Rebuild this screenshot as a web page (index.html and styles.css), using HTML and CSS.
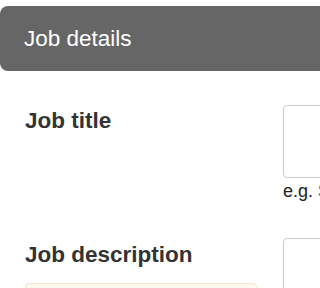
FILE: index.html
```html
<!DOCTYPE html>
<html lang="en">
<head>
<meta charset="utf-8">
<title>Job details</title>
<link rel="stylesheet" href="styles.css">
</head>
<body>
<div class="viewport">
<div class="page">
  <div class="panel-header">Job details</div>
  <div class="form">
    <div class="row row-title">
      <div class="label-col">
        <label class="label" for="title">Job title</label>
      </div>
      <div class="field-col">
        <div class="input" id="title"></div>
        <div class="hint">e.g. Software developer</div>
      </div>
    </div>
    <div class="row row-desc">
      <div class="label-col">
        <label class="label" for="desc">Job description</label>
        <div class="notice"></div>
      </div>
      <div class="field-col">
        <div class="input input-tall" id="desc"></div>
      </div>
    </div>
  </div>
</div>
</div>
</body>
</html>
```

FILE: styles.css
```css
html, body {
  margin: 0;
  padding: 0;
  background: #ffffff;
}
body {
  font-family: "Liberation Sans", Arial, sans-serif;
  color: #333333;
}
.viewport {
  width: 100%;
  height: 100vh;
  overflow: hidden;
}
.page {
  width: 640px;
  padding-top: 6px;
}
.panel-header {
  height: 65px;
  display: flex;
  align-items: center;
  padding-left: 24px;
  background: #666666;
  color: #ffffff;
  font-size: 22.5px;
  border-radius: 8px;
}
.row {
  display: grid;
  grid-template-columns: 258px 1fr;
}
.row-title {
  margin-top: 34px;
}
.row-desc {
  margin-top: 36px;
}
.label-col {
  padding-left: 25px;
  padding-top: 2px;
}
.row-desc .label-col {
  padding-top: 3px;
}
.label {
  display: block;
  font-weight: bold;
  font-size: 22.5px;
  line-height: 27px;
  color: #333333;
}
.field-col {
  padding-left: 25px;
}
.input {
  height: 71px;
  width: 300px;
  border: 1px solid #cccccc;
  border-radius: 4px;
}
.input-tall {
  height: 140px;
}
.hint {
  margin-top: 2px;
  font-size: 18px;
  line-height: 22px;
  color: #222222;
  white-space: nowrap;
}
.notice {
  margin-top: 15px;
  width: 230px;
  height: 60px;
  background: #fef8ee;
  border: 1px solid #f9e6c8;
  border-radius: 4px;
}
```
